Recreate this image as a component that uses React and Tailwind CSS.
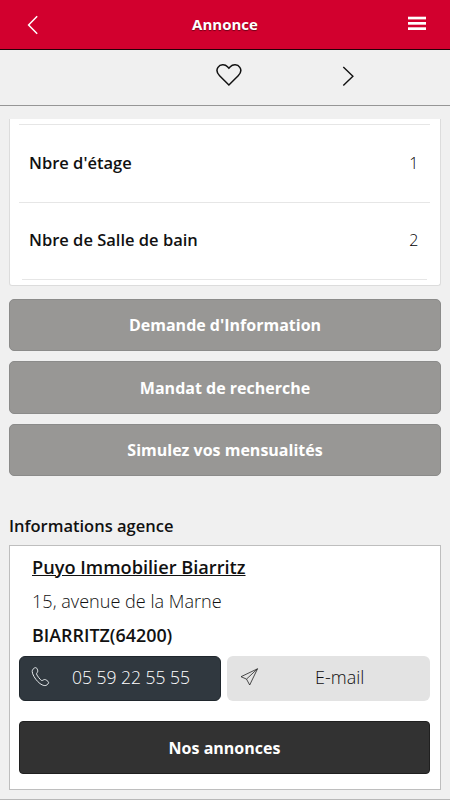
const details = [
  { label: "Nbre d'étage", value: '1' },
  { label: 'Nbre de Salle de bain', value: '2' }
];

const actions = [
  "Demande d'Information",
  'Mandat de recherche',
  'Simulez vos mensualités'
];

function Header() {
  return (
    <header className="flex h-[50px] items-center justify-between border-b border-[#250008] bg-[#d2002e] pr-6 pl-[27px]">
      <button className="w-[18px]" aria-label="Retour">
        <svg width="12" height="20" viewBox="0 0 12 20" fill="none" stroke="#fff" strokeWidth="1.5">
          <path d="M10.2 1.3 1.6 10l8.6 8.7" />
        </svg>
      </button>
      <h1 className="pr-[3px] text-[15px] font-bold text-white [text-shadow:0_1px_1px_#700018]">
        Annonce
      </h1>
      <button className="pb-[2px]" aria-label="Menu">
        <svg width="18" height="15" viewBox="0 0 18 15" fill="#fff">
          <rect y=".7" width="18" height="2.7" />
          <rect y="6" width="18" height="2.7" />
          <rect y="11.3" width="18" height="2.7" />
        </svg>
      </button>
    </header>
  );
}

function Toolbar() {
  return (
    <nav className="flex h-14 border-b border-[#969696] pt-[13px] pl-[215px]">
      <svg width="28" height="24" viewBox="0 0 28 24" fill="none" stroke="#111" strokeWidth="1.5">
        <path d="M13.9 22 4.6 12.7C2 10.1 1.2 7 3 4.3 5.2 1.1 10 1 12.5 3.7L13.9 5.2 15.3 3.7C17.8 1 22.7 1.1 24.8 4.3c1.8 2.7 1 5.8-1.6 8.4Z" />
      </svg>
      <svg className="ml-[99px]" width="13" height="26" viewBox="0 0 13 26" fill="none" stroke="#111" strokeWidth="1.4">
        <path d="m1.3 4 9.6 9.3-9.6 9.3" />
      </svg>
    </nav>
  );
}

function Details() {
  return (
    <section className="mx-[9px] mt-[13px] h-[167px] rounded-b-[3px] border border-t-0 border-[#dcdcdc] bg-white pt-[5px] pr-2.5 pl-[9px]">
      {details.map((item) => (
        <div
          key={item.label}
          className="flex h-[77.5px] items-center justify-between border-t border-[#e6e6e6] pr-[11.5px] pl-2.5"
        >
          <span className="text-[16.5px] font-semibold">{item.label}</span>
          <span className="pb-px text-base font-light text-black">{item.value}</span>
        </div>
      ))}
      <div className="mx-[3px] border-t border-[#e6e6e6]" />
    </section>
  );
}

function PhoneIcon() {
  return (
    <svg width="20" height="22" viewBox="0 0 20 22" fill="none" stroke="#e4e8ea" strokeWidth="1">
      <path d="M2 3.2c.9-1 2.2-1.9 3.1-1.5.8.4 1.7 2.2 1.7 3.5 0 1-1 1.6-1.3 2.5-.2 1 3.9 6.4 5.1 6.8.9.3 1.8-.8 2.8-1 1.3-.2 3.8 1.7 4.2 2.8.3.9-1.4 2.7-2.6 3.1-2.2.8-5.6-1.1-8.1-3.7C4 12.8 1.2 8.2 1.2 5.4c0-.8.3-1.6.8-2.2Z" />
    </svg>
  );
}

function PlaneIcon() {
  return (
    <svg width="19" height="18" viewBox="0 0 19 18" fill="none" stroke="#222" strokeWidth=".8" strokeLinejoin="round">
      <path d="M17.5.8 1 8.7l5.5 2.4L9.7 17Z" />
      <path d="M17.5.8 6.5 11.1" />
    </svg>
  );
}

function Agency() {
  return (
    <section className="mx-[9px] h-[245px] border border-[#bebebe] bg-white pr-2.5 pl-[9px]">
      <div className="pt-1 pl-[13px] leading-[34px]">
        <p className="text-[18.2px] font-semibold underline">Puyo Immobilier Biarritz</p>
        <p className="text-[18.1px] font-light">15, avenue de la Marne</p>
        <p className="text-[17.9px] font-semibold">BIARRITZ(64200)</p>
      </div>
      <div className="mt-1 flex h-[45px] gap-1.5">
        <a className="flex w-[202px] items-center rounded-md border border-[#20272d] bg-[#30383f] pb-0.5 pl-[11px] text-[17.5px] text-white">
          <PhoneIcon />
          <span className="ml-[21px] font-light">05 59 22 55 55</span>
        </a>
        <a className="flex flex-1 items-center rounded-md bg-[#e3e3e3] pb-0.5 pl-[13px] text-[18px]">
          <PlaneIcon />
          <span className="ml-14 font-light">E-mail</span>
        </a>
      </div>
      <button className="mt-5 h-[53px] w-full rounded border border-[#202020] bg-[#323232] pt-px text-base font-bold text-white">
        Nos annonces
      </button>
    </section>
  );
}

export default function App() {
  return (
    <div className="flex h-[800px] w-[450px] flex-col overflow-hidden border-b border-[#b8b8b8] bg-[#f0f0f0] font-['Open_Sans',sans-serif] text-[#111]">
      <Header />
      <Toolbar />
      <Details />
      <div className="mx-[9px] mt-[13px] flex flex-col gap-2.5">
        {actions.map((label) => (
          <button
            key={label}
            className="h-[52.4px] rounded-[5px] border border-[#8b8b8a] bg-[#989795] text-base font-bold text-white"
          >
            {label}
          </button>
        ))}
      </div>
      <h2 className="mt-[37.8px] mb-[7px] ml-[9px] text-[16.5px] leading-6 font-semibold">
        Informations agence
      </h2>
      <Agency />
    </div>
  );
}
